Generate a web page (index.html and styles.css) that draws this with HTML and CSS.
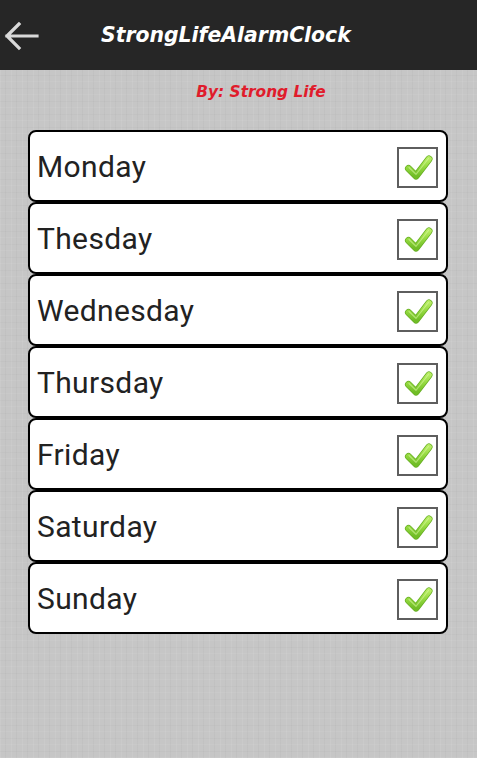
FILE: index.html
```html
<!DOCTYPE html>
<html lang="en">
<head>
<meta charset="utf-8">
<title>StrongLifeAlarmClock</title>
<link rel="stylesheet" href="styles.css">
</head>
<body>
<header class="action-bar">
  <svg class="back" width="36" height="32" viewBox="0 0 36 32" aria-hidden="true">
    <path d="M3 16 H33 M3 16 L15 4 M3 16 L15 28" fill="none" stroke="#d9d9d9" stroke-width="3.2" stroke-linecap="square"/>
  </svg>
  <h1 class="title">StrongLifeAlarmClock</h1>
</header>

<main class="content">
  <p class="byline">By: Strong Life</p>

  <ul class="days">
    <li class="day"><span class="day-name">Monday</span><span class="check"><svg viewBox="0 0 37 37"><use href="#tick"/></svg></span></li>
    <li class="day"><span class="day-name">Thesday</span><span class="check"><svg viewBox="0 0 37 37"><use href="#tick"/></svg></span></li>
    <li class="day"><span class="day-name">Wednesday</span><span class="check"><svg viewBox="0 0 37 37"><use href="#tick"/></svg></span></li>
    <li class="day"><span class="day-name">Thursday</span><span class="check"><svg viewBox="0 0 37 37"><use href="#tick"/></svg></span></li>
    <li class="day"><span class="day-name">Friday</span><span class="check"><svg viewBox="0 0 37 37"><use href="#tick"/></svg></span></li>
    <li class="day"><span class="day-name">Saturday</span><span class="check"><svg viewBox="0 0 37 37"><use href="#tick"/></svg></span></li>
    <li class="day"><span class="day-name">Sunday</span><span class="check"><svg viewBox="0 0 37 37"><use href="#tick"/></svg></span></li>
  </ul>
</main>

<svg class="defs" width="0" height="0" aria-hidden="true">
  <defs>
    <linearGradient id="tickFill" x1="0" y1="0" x2="0" y2="1">
      <stop offset="0" stop-color="#b6ec62"/>
      <stop offset="0.5" stop-color="#92d83e"/>
      <stop offset="1" stop-color="#70bd26"/>
    </linearGradient>
    <g id="tick">
      <path d="M9.5 19.5 L17 27 L30 10" fill="none" stroke="#66ad22" stroke-width="7" stroke-linecap="round" stroke-linejoin="round"/>
      <path d="M9.5 19.5 L17 27 L30 10" fill="none" stroke="url(#tickFill)" stroke-width="5.6" stroke-linecap="round" stroke-linejoin="round"/>
      <path d="M10 18.5 L17 25.3 L29.5 9.5" fill="none" stroke="#d8f8a4" stroke-width="1.2" stroke-linecap="round" opacity="0.55"/>
    </g>
  </defs>
</svg>
</body>
</html>
```

FILE: styles.css
```css
* { box-sizing: border-box; }

html, body {
  margin: 0;
  padding: 0;
}

body {
  min-height: 758px;
  font-family: Roboto, "Noto Sans", sans-serif;
  background-color: #c6c6c6;
  background-image:
    repeating-linear-gradient(90deg, rgba(255,255,255,0.07) 0 1px, transparent 1px 5px, rgba(0,0,0,0.025) 5px 6px, transparent 6px 11px),
    repeating-linear-gradient(0deg, rgba(255,255,255,0.06) 0 1px, transparent 1px 6px, rgba(0,0,0,0.02) 6px 7px, transparent 7px 13px);
}

.action-bar {
  height: 70px;
  background: #262626;
  display: flex;
  align-items: center;
}

.back {
  margin-left: 4px;
  margin-top: 1px;
}

.title {
  margin: 0 0 0 61px;
  font-family: "DejaVu Sans", Verdana, sans-serif;
  font-weight: bold;
  font-style: italic;
  font-size: 20.4px;
  letter-spacing: 0;
  color: #fff;
  position: relative;
  top: 0;
}

.content {
  padding: 0 29px 0 28px;
}

.byline {
  margin: 0;
  height: 60px;
  padding-top: 13px;
  text-align: center;
  font-family: "DejaVu Sans", Verdana, sans-serif;
  font-weight: bold;
  font-style: italic;
  font-size: 15.4px;
  letter-spacing: 0;
  color: #e01c2c;
  padding-left: 46px;
}

.days {
  list-style: none;
  margin: 0;
  padding: 0;
}

.day {
  height: 72px;
  background: #fff;
  border: 2px solid #000;
  border-radius: 8px;
  display: flex;
  align-items: center;
  justify-content: space-between;
  padding: 0 8px 0 7px;
}

.day-name {
  font-size: 30px;
  letter-spacing: 0.35px;
  color: #222;
}

.check {
  width: 41px;
  height: 41px;
  border: 2px solid #5e5e5e;
  background: #fff;
  display: block;
  position: relative;
  top: 1px;
}

.check svg {
  display: block;
  width: 37px;
  height: 37px;
}

.defs {
  position: absolute;
  width: 0;
  height: 0;
}
```
